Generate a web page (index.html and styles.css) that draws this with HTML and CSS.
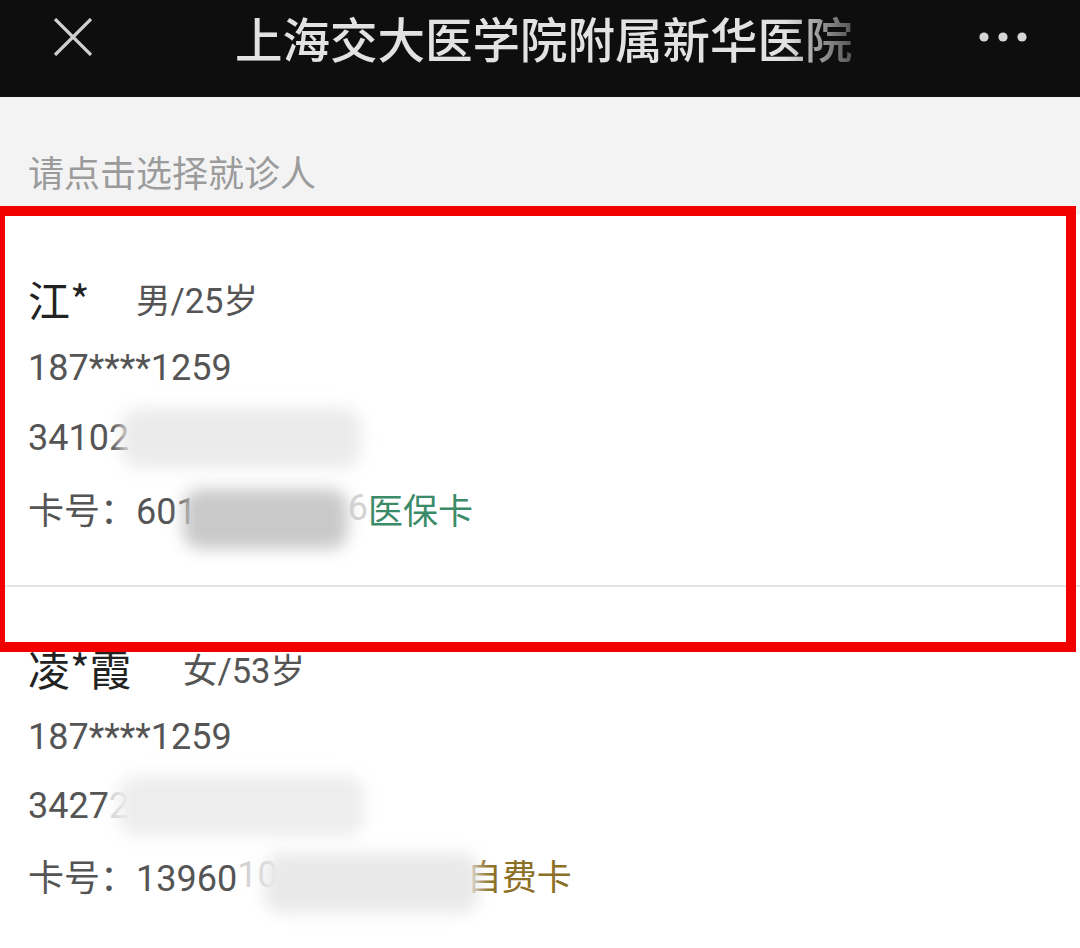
FILE: index.html
```html
<!DOCTYPE html>
<html lang="zh-CN">
<head>
<meta charset="utf-8">
<title>上海交大医学院附属新华医院</title>
<link rel="stylesheet" href="styles.css">
</head>
<body>
<div class="page">
  <header class="topbar">
    <svg class="close" width="40" height="38" viewBox="0 0 40 38"><path d="M2 1 L38 37 M38 1 L2 37" stroke="#cfcfcf" stroke-width="3.2" fill="none"/></svg>
    <div class="title">上海交大医学院附属新华医院</div>
    <svg class="more" width="48" height="10" viewBox="0 0 48 10"><circle cx="5" cy="5" r="4.6" fill="#d6d6d6"/><circle cx="24" cy="5" r="4.6" fill="#d6d6d6"/><circle cx="43" cy="5" r="4.6" fill="#d6d6d6"/></svg>
  </header>
  <div class="hint">请点击选择就诊人</div>
  <div class="list">
    <div class="patient">
      <div class="row name-row"><span class="name">江*</span><span class="meta">男/25岁</span></div>
      <div class="row">187****1259</div>
      <div class="row">34102<span class="blur blur-id1"></span></div>
      <div class="row">卡号：601<span class="blur blur-card1"></span><span class="faint">6</span> <span class="tag tag-ins">医保卡</span></div>
    </div>
    <div class="patient">
      <div class="row name-row"><span class="name">凌*霞</span><span class="meta">女/53岁</span></div>
      <div class="row">187****1259</div>
      <div class="row">3427<span class="faint">2</span><span class="blur blur-id2"></span></div>
      <div class="row">卡号：13960<span class="faint">10</span><span class="blur blur-card2"></span><span class="tag tag-self">自费卡</span></div>
    </div>
    <div class="highlight"></div>
  </div>
</div>
</body>
</html>
```
FILE: styles.css
```css
html, body {
  margin: 0;
  padding: 0;
  background: #ffffff;
}
body {
  font-family: Roboto, "Noto Sans CJK SC", "Noto Sans", sans-serif;
  width: 1080px;
  height: 948px;
  overflow: hidden;
}
.page {
  width: 1080px;
  height: 948px;
  background: #ffffff;
}
.topbar {
  height: 97px;
  background: #0e0e0e;
  display: flex;
  align-items: flex-start;
  box-sizing: border-box;
}
.close {
  margin-left: 53px;
  margin-top: 18px;
  flex: none;
}
.title {
  margin-left: 142px;
  width: 626px;
  height: 76px;
  line-height: 76px;
  font-family: "Noto Sans CJK SC", sans-serif;
  font-size: 47.5px;
  font-weight: 500;
  color: #e2e2e2;
  white-space: nowrap;
  overflow: hidden;
  -webkit-mask-image: linear-gradient(to right, #000 88%, rgba(0,0,0,0.25) 100%);
  mask-image: linear-gradient(to right, #000 88%, rgba(0,0,0,0.25) 100%);
  flex: none;
}
.more {
  margin-left: auto;
  margin-right: 53px;
  margin-top: 32px;
  flex: none;
}
.hint {
  height: 118px;
  background: #f3f3f3;
  box-sizing: border-box;
  padding-left: 28px;
  padding-top: 50px;
  font-family: "Noto Sans CJK SC", sans-serif;
  font-size: 36px;
  line-height: 48px;
  color: #9b9b9b;
}
.list {
  position: relative;
}
.patient {
  padding: 48px 0 42px 28px;
  border-bottom: 2px solid #e4e4e4;
}
.patient + .patient {
  border-bottom: none;
  padding-top: 46px;
}
.row {
  height: 70px;
  display: flex;
  align-items: center;
  font-size: 36px;
  color: #555555;
  white-space: pre;
}
.patient + .patient .row {
  height: 69px;
}
.name {
  font-family: "Noto Sans CJK SC", sans-serif;
  font-size: 42px;
  color: #222222;
  width: 108px;
}
.meta {
  font-size: 34.5px;
  color: #555555;
}
.patient + .patient .name {
  width: 155px;
}
.faint {
  color: #d4d4d4;
}
.blur {
  display: inline-block;
  height: 60px;
  filter: blur(8px);
  border-radius: 18px;
}
.blur-id1 {
  width: 240px;
  margin-left: -8px;
  background: #ebebeb;
}
.blur-card1 {
  width: 165px;
  background: #c9c9c9;
  margin-left: -14px;
  margin-top: 22px;
}
.blur-id2 {
  width: 245px;
  margin-left: -10px;
  background: #ededed;
}
.blur-card2 {
  width: 215px;
  margin-left: -14px;
  background: #e9e9e9;
  margin-top: 16px;
}
.tag {
  font-family: "Noto Sans CJK SC", sans-serif;
  font-size: 35px;
}
.tag-ins {
  color: #3b8a68;
}
.tag-self {
  color: #8c7026;
  margin-left: -12px;
}
.highlight {
  position: absolute;
  left: -5px;
  top: -9px;
  width: 1081px;
  height: 446px;
  border: 10px solid #f20000;
  box-sizing: border-box;
  pointer-events: none;
}
```
